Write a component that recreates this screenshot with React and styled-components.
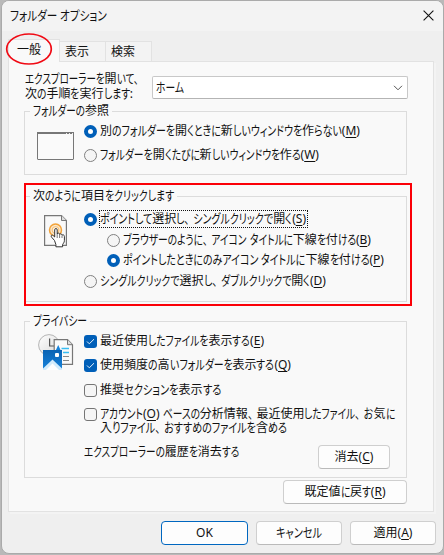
import React, { useLayoutEffect, useRef } from 'react';
import styled, { createGlobalStyle, css } from 'styled-components';

// Splits a label into kana runs and everything else, kana is set narrow like in a UI font
const KANA = /([\u3000-\u30ff]+)/;

const Label = ({ text, width, hotkey, after }) => {
    const ref = useRef(null);

    useLayoutEffect(() => {
        const runs = [...ref.current.querySelectorAll('[data-kana]')];
        const sizes = runs.map((r) => r.firstChild.getBoundingClientRect().width);
        const kana = sizes.reduce((a, b) => a + b, 0);
        if (!kana) return;
        const rest = ref.current.getBoundingClientRect().width - kana;
        const k = (width - rest) / kana;
        runs.forEach((r, i) => {
            r.style.width = `${sizes[i] * k}px`;
            r.firstChild.style.transform = `scaleX(${k})`;
        });
    }, [text, width]);

    const split = (t) => t.split(KANA).filter(Boolean).map((part, i) => (
        KANA.test(part)
            ? (
                <Run key={i} data-kana="">
                    <Glyphs>
                        {part.split(/(、)/).map((p, j) => (p === '、' ? <Comma key={j}>、</Comma> : p))}
                    </Glyphs>
                </Run>
            )
            : <span key={i}>{part}</span>
    ));

    return (
        <Line ref={ref}>
            {split(text)}
            {hotkey && <span>(<Key>{hotkey}</Key>)</span>}
            {after && split(after)}
        </Line>
    );
};

const Radio = ({ text, width, hotkey, checked, focus, ...rest }) => (
    <Option {...rest}>
        <Dot $on={checked} />
        <Caption $focus={focus}><Label text={text} width={width} hotkey={hotkey} /></Caption>
    </Option>
);

const Check = ({ children, checked, ...rest }) => (
    <Option {...rest}>
        <Box $on={checked}>
            {checked && (
                <svg width="13" height="13" viewBox="0 0 13 13">
                    <path d="M3 6.5 5.3 8.8 10 4.2" fill="none" stroke="#e6f1fb" strokeWidth="1" />
                </svg>
            )}
        </Box>
        <Caption>{children}</Caption>
    </Option>
);

const WindowIcon = () => (
    <svg width="37" height="28" viewBox="0 0 37 28">
        <rect x="0.5" y="0.5" width="36" height="27" rx="0.5" fill="#fafafa" stroke="#777" />
        <path d="M0 1H37" stroke="#777" strokeWidth="2" />
        <path d="M29 1.5h1M32 1.5h1M35 1.5h1" stroke="#eee" />
    </svg>
);

const ClickIcon = () => (
    <svg width="24" height="33" viewBox="0 0 24 33">
        <path d="M.6 .6H17.5L22.4 5.5V30.4H.6Z" fill="#f9f9f9" stroke="#777" strokeWidth="1.2" />
        <path d="M17.5 .6V5.5H22.4" fill="#ddd" stroke="#777" />
        <circle cx="11.5" cy="15" r="6" fill="#fbe6c8" stroke="#f2a33a" strokeWidth="1.5" />
        <circle cx="11.5" cy="15" r="3.4" fill="#fff1dc" stroke="#f5bd70" />
        <path
            d="M10.5 25.5 7.6 22.2C6.2 20.4 8.2 19.5 9.4 20.8L10.7 22V14.9C10.7 13 13.2 13 13.2 14.9V19C13.6 17.6 15.5 17.8 15.6 19.4C16.3 18.4 17.9 18.8 18 20.2C19 19.4 20.4 20 20.4 21.4V25.5C20.4 27.5 19.2 28.4 18.6 29.6V31.8H11.9V29.5Z"
            fill="#fff" stroke="#333" strokeWidth="1"
        />
        <path d="M13.2 19v4M15.6 19.5v3.5M18 20.5v2.5" stroke="#555" strokeWidth=".8" />
    </svg>
);

const PrivacyIcon = () => (
    <svg width="36" height="37" viewBox="0 0 36 37">
        <defs>
            <linearGradient id="clock" x1="0" y1="0" x2="1" y2="1">
                <stop offset="0" stopColor="#ffffff" />
                <stop offset="1" stopColor="#d8d8d8" />
            </linearGradient>
            <linearGradient id="photo" x1="0" y1="0" x2="0" y2="1">
                <stop offset="0" stopColor="#0a63b3" />
                <stop offset="1" stopColor="#1683dc" />
            </linearGradient>
        </defs>
        <circle cx="11" cy="11" r="10.4" fill="url(#clock)" stroke="#b5b5b5" />
        <path d="M11.6 4.5V12H16" fill="none" stroke="#555" strokeWidth="1.2" />
        <path d="M16.2 5.7H29.5L34.5 10.7V30.3H16.2Z" fill="#fafafa" stroke="#777" strokeWidth="1.2" />
        <path d="M29.5 5.7V10.7H34.5" fill="#ddd" stroke="#777" />
        <path d="M17.5 17 20.2 11 23 17Z" fill="#1683dc" />
        <path d="M23.5 14.5H31M25 18.5H31" stroke="#38bdf2" strokeWidth="1.6" />
        <path d="M25 22.5H31M25 26.5H31" stroke="#888" />
        <rect x="5" y="16" width="19" height="20" fill="url(#photo)" />
        <rect x="17" y="19" width="4" height="4" rx="1" fill="#fff" />
        <path d="M5 36V34.5L14.5 25.5 24 34.5V36Z" fill="#d3ecfc" />
        <path d="M8 36 14.5 29.5 21 36Z" fill="#fff" />
    </svg>
);

const App = () => {

    return (
        <>
            <Global />
            <Desktop>
                <Dialog>
                    <TitleBar>
                        <Label text="フォルダー オプション" width={97} />
                        <svg width="11" height="11" viewBox="0 0 11 11">
                            <path d="M.6 .6 10.4 10.4M10.4 .6.6 10.4" stroke="#111" strokeWidth="1.1" />
                        </svg>
                    </TitleBar>
                    <Tabs>
                        <Tab $active $width={52}>
                            <Label text="一般" width={24} />
                            <Ring width="48" height="34" viewBox="0 0 48 34">
                                <ellipse cx="24" cy="17" rx="22.3" ry="15" fill="none" stroke="#f00a14" strokeWidth="1.7" />
                            </Ring>
                        </Tab>
                        <Tab $width={46}><Label text="表示" width={24} /></Tab>
                        <Tab $width={46}><Label text="検索" width={24} /></Tab>
                    </Tabs>
                    <Panel>
                        <OpenRow>
                            <Prompt>
                                <Label text="エクスプローラーを開いて、" width={117} />
                                <Label text="次の手順を実行します:" width={108} />
                            </Prompt>
                            <Combo>
                                <Label text="ホーム" width={28} />
                                <svg width="10" height="6" viewBox="0 0 10 6">
                                    <path d="M1 .8 5 4.8 9 .8" fill="none" stroke="#555" />
                                </svg>
                            </Combo>
                        </OpenRow>

                        <Group $height={72}>
                            <Legend><Label text="フォルダーの参照" width={76} /></Legend>
                            <Picture $left={12} $top={12}><WindowIcon /></Picture>
                            <Options>
                                <Radio $top={3} checked text="別のフォルダーを開くときに新しいウィンドウを作らない" hotkey="M" width={260} />
                                <Radio $top={8} text="フォルダーを開くたびに新しいウィンドウを作る" hotkey="W" width={219} />
                            </Options>
                        </Group>

                        <Group $height={114} $gap={13}>
                            <Legend><Label text="次のように項目をクリックします" width={141} /></Legend>
                            <Picture $left={19} $top={10}><ClickIcon /></Picture>
                            <Options>
                                <Radio $top={6} checked focus text="ポイントして選択し、シングルクリックで開く" hotkey="S" width={206} />
                                <Radio $top={5} $indent text="ブラウザーのように、アイコン タイトルに下線を付ける" hotkey="B" width={248} />
                                <Radio $top={4} $indent checked text="ポイントしたときにのみアイコン タイトルに下線を付ける" hotkey="P" width={261} />
                                <Radio $top={5} text="シングルクリックで選択し、ダブルクリックで開く" hotkey="D" width={226} />
                            </Options>
                            <RedFrame />
                        </Group>

                        <Group $height={165} $gap={11}>
                            <Legend><Label text="プライバシー" width={54} /></Legend>
                            <Picture $left={13} $top={4}><PrivacyIcon /></Picture>
                            <Options>
                                <Check $top={3} checked><Label text="最近使用したファイルを表示する" hotkey="E" width={164} /></Check>
                                <Check $top={8} checked><Label text="使用頻度の高いフォルダーを表示する" hotkey="Q" width={191} /></Check>
                                <Check $top={9}><Label text="推奨セクションを表示する" width={121} /></Check>
                                <Check $top={8}>
                                    <Label text="アカウント" hotkey="O" after=" ベースの分析情報、最近使用したファイル、お気に" width={295} />
                                    <Label text="入りファイル、おすすめのファイルを含める" width={187} />
                                </Check>
                                <History>
                                    <Label text="エクスプローラーの履歴を消去する" width={155} />
                                    <Button $width={72}><Label text="消去" hotkey="C" width={38} /></Button>
                                </History>
                            </Options>
                        </Group>

                        <Restore>
                            <Button $width={124}><Label text="既定値に戻す" hotkey="R" width={81} /></Button>
                        </Restore>
                    </Panel>
                    <Footer>
                        <Button $width={87} $primary>OK</Button>
                        <Button $width={86}><Label text="キャンセル" width={46} /></Button>
                        <Button $width={86}><Label text="適用" hotkey="A" width={39} /></Button>
                    </Footer>
                </Dialog>
            </Desktop>
        </>
    );
};
export default App;


const Global = createGlobalStyle`
  body {
    margin: 0;
    overflow: hidden;
    font-family: "Noto Sans", "Noto Sans CJK JP", sans-serif;
    font-size: 12px;
    line-height: 16px;
    color: #111;
  }
  * {
    box-sizing: border-box;
  }
  svg {
    display: block;
    flex: none;
  }
`
const Line = styled.span`
  display: flex;
  width: max-content;
  height: 16px;
  line-height: 16px;
  white-space: pre;
  font-feature-settings: "palt";
`
const Run = styled.span`
  display: block;
  height: 16px;
`
const Glyphs = styled.span`
  display: block;
  width: max-content;
  line-height: 15px;
  transform-origin: 0 50%;
  font-size: 13px;
`
const Comma = styled.span`
  margin-right: 5px;
`
const Key = styled.span`
  text-decoration: underline;
  text-underline-offset: 2px;
`
const Desktop = styled.div`
  width: 444px;
  height: 555px;
  padding-left: 1px;
  background: #b9b9b9;
`
const Dialog = styled.div`
  width: 443px;
  height: 554px;
  border: 1px solid #aaa;
  border-radius: 8px;
  background: #efefef;
  overflow: hidden;
`
const TitleBar = styled.div`
  display: flex;
  align-items: center;
  justify-content: space-between;
  height: 30px;
  padding: 0 9px 1px 8px;
  background: #f3f3f3;
`
const Tabs = styled.div`
  display: flex;
  align-items: flex-end;
  height: 30px;
  padding-left: 6px;
`
const Tab = styled.div`
  display: flex;
  align-items: center;
  position: relative;
  width: ${({ $width }) => $width}px;
  height: 20px;
  padding-left: 5px;
  border: 1px solid #e2e2e2;
  border-width: 1px 1px 0 0;
  background: #f3f3f3;
  ${({ $active }) => $active && css`
    height: 23px;
    margin-bottom: -1px;
    padding: 0 0 3px 8px;
    border-left-width: 1px;
    background: #f9f9f9;
    z-index: 1;
  `}
`
const Ring = styled.svg`
  position: absolute;
  left: -4px;
  top: -8px;
`
const Panel = styled.div`
  width: 426px;
  height: 451px;
  margin-left: 6px;
  padding: 9px 26px 0 15px;
  border: 1px solid #e2e2e2;
  background: #f9f9f9;
  box-shadow: 2px 2px 0 #f3f3f3;
`
const OpenRow = styled.div`
  display: flex;
  justify-content: space-between;
  height: 32px;
  margin-right: -1px;
`
const Prompt = styled.div`
  padding-left: 1px;
  ${Line} + ${Line} {
    margin-top: -1px;
  }
`
const Combo = styled.div`
  display: flex;
  align-items: center;
  justify-content: space-between;
  width: 256px;
  height: 23px;
  margin: 5px 0 0;
  padding: 0 4px 0 3px;
  border: 1px solid #c8c8c8;
  border-bottom-color: #b4b4b4;
  border-radius: 2px;
  background: #fff;
`
const Group = styled.fieldset`
  display: flex;
  position: relative;
  min-width: 0;
  height: ${({ $height }) => $height}px;
  margin: ${({ $gap }) => $gap || 0}px 0 0;
  padding: 0;
  border: 1px solid #dcdcdc;
`
const Legend = styled.legend`
  height: 17px;
  margin-left: 5px;
  padding: 0 3px;
`
const Picture = styled.div`
  flex: none;
  width: 59px;
  padding: ${({ $top, $left }) => `${$top}px 0 0 ${$left}px`};
`
const Options = styled.div`
  flex: 1;
  min-width: 0;
`
const Option = styled.div`
  display: flex;
  align-items: flex-start;
  gap: 3px;
  margin-top: ${({ $top }) => $top}px;
  padding-left: ${({ $indent }) => ($indent ? 23 : 0)}px;
`
const Dot = styled.span`
  flex: none;
  width: 13px;
  height: 13px;
  margin-top: 2px;
  border: ${({ $on }) => ($on ? '4px solid #005fb8' : '1px solid #808080')};
  border-radius: 50%;
  background: ${({ $on }) => ($on ? '#fff' : '#f5f5f5')};
`
const Box = styled.span`
  flex: none;
  width: 13px;
  height: 13px;
  margin-top: 2px;
  border: ${({ $on }) => ($on ? '0' : '1px solid #757575')};
  border-radius: 3px;
  background: ${({ $on }) => ($on ? '#005fb8' : '#f5f5f5')};
`
const Caption = styled.span`
  ${({ $focus }) => $focus && css`
    padding: 0 1px 0 0;
    outline: 1px dotted #111;
  `}
  ${Line} + ${Line} {
    margin-top: -2px;
  }
`
const RedFrame = styled.div`
  position: absolute;
  top: -22px;
  left: -1px;
  width: 388px;
  height: 123px;
  border: 2px solid #fb0007;
`
const History = styled.div`
  display: flex;
  justify-content: space-between;
  margin-top: 9px;
  padding-right: 16px;
  > ${Line} {
    margin-top: -1px;
  }
`
const Button = styled.div`
  display: flex;
  align-items: center;
  justify-content: center;
  width: ${({ $width }) => $width}px;
  height: 24px;
  padding-bottom: 1px;
  border: 1px solid ${({ $primary }) => ($primary ? '#0067c0' : '#cfcfcf')};
  border-bottom-color: ${({ $primary }) => ($primary ? '#0067c0' : '#bababa')};
  border-radius: 4px;
  background: #fdfdfd;
`
const Restore = styled.div`
  display: flex;
  justify-content: flex-end;
  margin-top: 2px;
`
const Footer = styled.div`
  display: flex;
  justify-content: flex-end;
  gap: 8px;
  padding: 9px 7px 0 0;
`
